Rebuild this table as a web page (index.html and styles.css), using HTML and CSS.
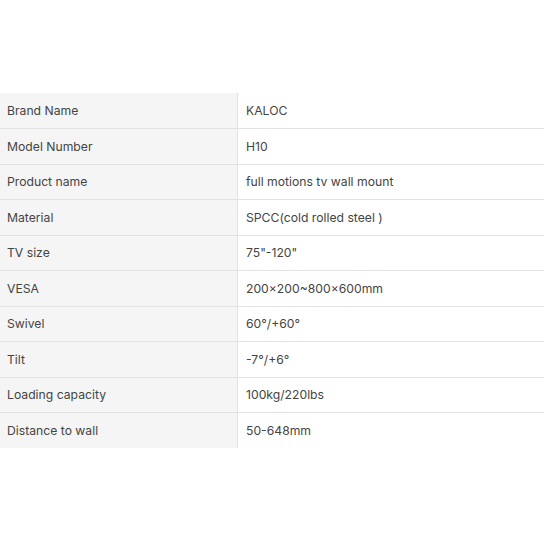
FILE: index.html
```html
<!DOCTYPE html>
<html>
<head>
<meta charset="utf-8">
<link rel="stylesheet" href="styles.css">
</head>
<body>
<div class="page">
<table class="specs">
<tbody>
<tr><th>Brand Name</th><td>KALOC</td></tr>
<tr><th>Model Number</th><td>H10</td></tr>
<tr><th>Product name</th><td>full motions tv wall mount</td></tr>
<tr><th>Material</th><td>SPCC(cold rolled steel )</td></tr>
<tr><th>TV size</th><td>75"-120"</td></tr>
<tr><th>VESA</th><td>200×200~800×600mm</td></tr>
<tr><th>Swivel</th><td>60°/+60°</td></tr>
<tr><th>Tilt</th><td>-7°/+6°</td></tr>
<tr><th>Loading capacity</th><td>100kg/220lbs</td></tr>
<tr><th>Distance to wall</th><td>50-648mm</td></tr>
</tbody>
</table>
</div>
</body>
</html>
```
FILE: styles.css
```css
html, body {
  margin: 0;
  padding: 0;
  background: #fff;
}
.page {
  width: 544px;
  height: 544px;
  padding-top: 93px;
  box-sizing: border-box;
}
.specs {
  width: 100%;
  border-collapse: collapse;
  font-family: Inter, "Liberation Sans", sans-serif;
  font-size: 12.2px;
  color: #444;
}
.specs tr {
  height: 35.5px;
  border-bottom: 1px solid #e2e2e2;
}
.specs tr:last-child {
  border-bottom: none;
}
.specs th,
.specs td {
  padding: 0 0 0 7px;
  text-align: left;
  font-weight: normal;
  vertical-align: middle;
}
.specs th {
  width: 230px;
  background: #f5f5f5;
  border-right: 1px solid #e2e2e2;
}
.specs td {
  padding-left: 8px;
}
```
